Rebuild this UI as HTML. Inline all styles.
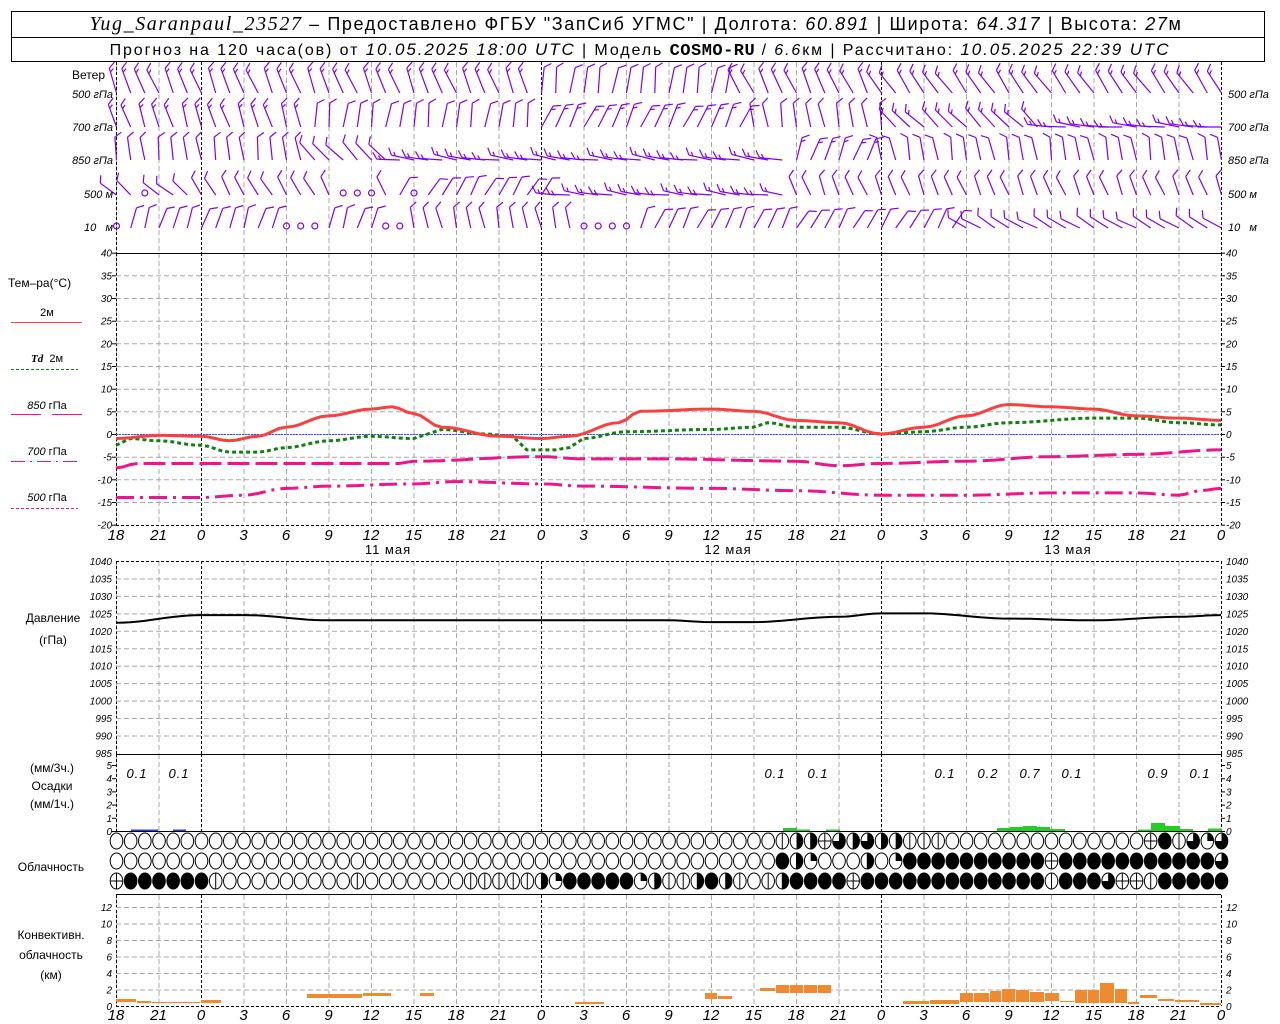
<!DOCTYPE html>
<html><head><meta charset="utf-8">
<style>
html,body{margin:0;padding:0;background:#fff;}
body{width:1280px;height:1024px;overflow:hidden;position:relative;font-family:"Liberation Sans",sans-serif;}
svg{position:absolute;left:0;top:0;}
</style></head><body>
<svg id="s" width="1280" height="1024" xmlns="http://www.w3.org/2000/svg" font-family="Liberation Sans, sans-serif">
<rect x="11.5" y="11.5" width="1253" height="50" fill="none" stroke="#000"/>
<line x1="11" y1="37.5" x2="1265" y2="37.5" stroke="#000"/>
<text x="636" y="30" font-size="18" text-anchor="middle" letter-spacing="1.6"><tspan font-family="Liberation Serif, serif" font-style="italic" font-size="20">Yug_Saranpaul_23527</tspan> – Предоставлено ФГБУ "ЗапСиб УГМС" | Долгота: <tspan font-style="italic">60.891</tspan> | Широта: <tspan font-style="italic">64.317</tspan> | Высота: <tspan font-style="italic">27</tspan>м</text>
<text x="640" y="55" font-size="16" text-anchor="middle" letter-spacing="1.9">Прогноз на 120 часа(ов) от <tspan font-style="italic" font-size="17">10.05.2025 18:00 UTC</tspan>  | Модель <tspan font-family="Liberation Mono, monospace" font-weight="bold" font-size="17" letter-spacing="0.5">COSMO-RU</tspan> / <tspan font-style="italic">6.6</tspan>км | Рассчитано: <tspan font-style="italic" font-size="17">10.05.2025 22:39 UTC</tspan></text>
<g id="g"></g>
</svg>
<script>
var g=document.getElementById('g');var out='';
var X0=116,PH=1105/78;
function X(h){return X0+h*PH;}
function L(x1,y1,x2,y2,st){out+='<line x1="'+x1.toFixed(1)+'" y1="'+y1.toFixed(1)+'" x2="'+x2.toFixed(1)+'" y2="'+y2.toFixed(1)+'" '+st+'/>';}
function T(x,y,t,st){out+='<text x="'+x+'" y="'+y+'" '+(st||'')+'>'+t+'</text>';}
var GD='stroke="#a8a8a8" stroke-dasharray="5,3"';
var BD='stroke="#000" stroke-dasharray="3,2"';
function vgrid(y1,y2){for(var h=0;h<=78;h+=3){var day=(h%24==6);L(X(h)+.5,y1,X(h)+.5,y2,day?BD:GD);}L(X0+.5,y1,X0+.5,y2,BD);L(1221.5,y1,1221.5,y2,BD);}
vgrid(62,253);vgrid(253,525);vgrid(561,754);vgrid(754,831);vgrid(895,1006);
var ty=function(v){return 434-v*4.533;};
for(var v=-15;v<=35;v+=5){L(X0,ty(v)+.5,1221,ty(v)+.5,GD);}
L(X0,253.5,1221,253.5,'stroke="#000"');L(X0,525.5,1221,525.5,BD);
L(X0,434.5,1221,434.5,'stroke="#3050ff" stroke-dasharray="2,1"');
var IT='font-size="10" font-style="italic"';
for(v=-20;v<=40;v+=5){var y=ty(v)+4;T(112,y,v,IT+' text-anchor="end"');T(1226,y,v,IT);L(112,ty(v)+.5,116,ty(v)+.5,'stroke="#000"');L(1221,ty(v)+.5,1225,ty(v)+.5,'stroke="#000"');}
var py=function(p){return 561+(1040-p)*3.49;};
for(var p=990;p<=1035;p+=5)L(X0,py(p)+.5,1221,py(p)+.5,GD);
L(X0,561.5,1221,561.5,BD);L(X0,754.5,1221,754.5,'stroke="#000"');
for(p=985;p<=1040;p+=5){T(112,py(p)+4,p,IT+' text-anchor="end"');T(1226,py(p)+4,p,IT);}
var qy=function(v){return 831-v*13.2;};
L(X0,831.5,1221,831.5,'stroke="#000"');
for(v=0;v<=5;v++){T(112,qy(v)+4,v,IT+' text-anchor="end"');T(1226,qy(v)+4,v,IT);L(112,qy(v)+.5,116,qy(v)+.5,'stroke="#000"');L(1221,qy(v)+.5,1225,qy(v)+.5,'stroke="#000"');}
var cy=function(v){return 1006-v*8.25;};
for(v=2;v<=12;v+=2)L(X0,cy(v)+.5,1221,cy(v)+.5,GD);
L(X0,894.5,1221,894.5,'stroke="#000"');L(X0,1006.5,1221,1006.5,BD);
for(v=0;v<=12;v+=2){T(112,cy(v)+4,v,IT+' text-anchor="end"');T(1226,cy(v)+4,v,IT);}
var TL='font-size="15" font-style="italic" text-anchor="middle"';
for(var h=0;h<=78;h+=3){var hr=(18+h)%24;T(X(h),540,hr,TL);T(X(h),1020,hr,TL);}
T(388,554,'11 мая','font-size="13" text-anchor="middle" letter-spacing="1"');T(728,554,'12 мая','font-size="13" text-anchor="middle" letter-spacing="1"');T(1068,554,'13 мая','font-size="13" text-anchor="middle" letter-spacing="1"');
function interp(pts,h){for(var i=0;i<pts.length-1;i++){if(h>=pts[i][0]&&h<=pts[i+1][0]){var a=pts[i],b=pts[i+1],t=(h-a[0])/(b[0]-a[0]);t=(1-Math.cos(t*Math.PI))/2;return a[1]+(b[1]-a[1])*t;}}return pts[pts.length-1][1];}
function curve(pts,fy,st){var d='';for(var h=0;h<=78;h+=0.5){d+=(h?'L':'M')+X(h).toFixed(1)+','+fy(interp(pts,h)).toFixed(1);}out+='<path d="'+d+'" fill="none" '+st+'/>';}
var t2=[[0,-1],[3,-0.3],[6,-0.5],[8,-1.5],[10,-0.5],[12,1.5],[15,4],[18,5.5],[19.5,6],[21,4.5],[23,1.5],[27,-0.5],[30,-1],[32,-0.5],[35.5,2.5],[37,5],[42,5.5],[45,5],[48,3],[51,2.5],[54,0],[57,1.5],[60,4],[63,6.5],[66,6],[69,5.5],[72,4],[75,3.5],[78,3]];
var td=[[0,-2.5],[1,-1],[3,-1.5],[6,-2.5],[8,-4],[10,-4],[12,-3],[15,-1.5],[18,-0.5],[21,-1],[22,0],[23,1],[26,0],[28,-0.5],[29,-3.5],[31,-3.5],[32,-3],[33,-1],[36,0.5],[42,1],[45,1.5],[46,2.5],[48,1.5],[51,1.5],[54,0],[57,0.5],[60,1.5],[63,2.5],[69,3.5],[72,3.5],[75,2.5],[78,2]];
var p850=[[0,-7.5],[1.5,-6.5],[12,-6.5],[20,-6.5],[21,-6],[30,-5],[33,-5.5],[39,-5.5],[48,-6],[51,-7],[54,-6.5],[60,-6],[66,-5],[72,-4.5],[78,-3.5]];
var p500=[[0,-14],[6,-14],[9,-13.5],[12,-12],[15,-11.5],[21,-11],[24,-10.5],[30,-11],[33,-11.5],[42,-12],[48,-12.5],[54,-13.5],[60,-13.5],[66,-13],[72,-13],[75,-13.5],[76.5,-12.5],[78,-12]];
curve(p500,ty,'stroke="#f0148c" stroke-width="3" stroke-dasharray="18,6,3,6"');
curve(p850,ty,'stroke="#f0148c" stroke-width="3" stroke-dasharray="22,6"');
curve(td,ty,'stroke="#108010" stroke-width="3" stroke-dasharray="4,3"');
curve(t2,ty,'stroke="#f84040" stroke-width="3"');
var pr=[[0,1022.3],[6,1024.5],[9,1024.5],[15,1023],[21,1023],[30,1023],[39,1023],[42,1022.5],[45,1022.5],[51,1024],[54,1025],[57,1025],[63,1023.5],[69,1023],[75,1024],[78,1024.5]];
curve(pr,py,'stroke="#000" stroke-width="2"');
function R(x1,y1,x2,y2,c){out+='<rect x="'+x1+'" y="'+y1+'" width="'+(x2-x1)+'" height="'+(y2-y1)+'" fill="'+c+'"/>';}
var GR='#20d020';
[[783,797,828],[797,810,829.5],[826,840,829.5],[997,1010,828],[1010,1023,827],[1023,1037,826],[1037,1050,827],[1050,1065,829],[1138,1151,829.5],[1151,1165,823],[1165,1180,826],[1180,1193,829],[1208,1222,828.5]].forEach(function(b){R(b[0],b[2],b[1],831,GR);});
R(131,829.5,158,831,'#2040e0');R(173,829.5,186,831,'#2040e0');
[137,179,775,818,945,988,1030,1072,1158,1200].forEach(function(x,i){var l=['0.1','0.1','0.1','0.1','0.1','0.2','0.7','0.1','0.9','0.1'][i];T(x,778,l,'font-size="13" font-style="italic" text-anchor="middle" letter-spacing="1"');});
var OR='#f08a30';
[[116,137,999,1002],[137,152,1001,1003],[152,201,1002,1003],[201,222,1000,1003],[307,363,994,998],[363,392,993,996],[420,435,993,996],[575,605,1002,1004],[705,718,993,999],[718,733,996,999],[760,776,988,991],[776,790,985,993],[790,804,985,993],[804,818,985,993],[818,832,985,993],[903,930,1001,1004],[930,960,1000,1004],[960,974,993,1002],[974,990,993,1002],[990,1002,991,1002],[1002,1016,989,1002],[1016,1030,990,1002],[1030,1045,992,1002],[1045,1060,993,1001],[1060,1075,1001,1002],[1075,1088,990,1003],[1088,1100,990,1003],[1100,1115,983,1003],[1115,1128,989,1003],[1128,1140,1002,1004],[1140,1158,995,998],[1158,1175,999,1001],[1175,1200,1000,1002],[1200,1222,1003,1005]].forEach(function(b){R(b[0],b[2],b[1]-1,b[3],OR);});
function row(def){var a=[];for(var i=0;i<79;i++)a.push('o');for(var k in def)a[+k]=def[k];return a;}
var r1=row({47:'v',48:'Q',49:'R',50:'H',51:'T',52:'R',53:'T',54:'R',55:'Q',56:'v',57:'v',58:'v',73:'H',74:'f',75:'v',76:'T',77:'q',78:'T'});
var r2d={47:'f',48:'R',49:'q',53:'R',55:'q'};for(var i=56;i<=78;i++)r2d[i]='f';r2d[66]='H';r2d[78]='T';
var r2=row(r2d);
var r3d={0:'H'};for(i=1;i<=6;i++)r3d[i]='f';[7,17,25,26,27,28,29].forEach(function(k){r3d[k]='v';});r3d[30]='R';r3d[31]='q';for(i=32;i<=36;i++)r3d[i]='f';r3d[37]='q';r3d[38]='R';r3d[39]='v';r3d[40]='v';r3d[41]='R';
for(i=42;i<=78;i++)r3d[i]='f';r3d[43]='R';r3d[44]='v';r3d[45]='o';r3d[46]='v';r3d[47]='R';r3d[52]='H';r3d[66]='v';r3d[70]='T';r3d[71]='H';r3d[72]='H';r3d[73]='v';
var r3=row(r3d);
function cloud(x,y,t){var rx=6.3,ry=8;out+='<ellipse cx="'+x+'" cy="'+y+'" rx="'+rx+'" ry="'+ry+'" fill="'+(t=='f'?'#000':'#fff')+'" stroke="#000"/>';
if(t=='v'||t=='R'||t=='H')L(x,y-ry,x,y+ry,'stroke="#000"');
if(t=='H')L(x-rx,y,x+rx,y,'stroke="#000"');
if(t=='R')out+='<path d="M'+x+','+(y-ry)+'A'+rx+','+ry+' 0 0 1 '+x+','+(y+ry)+'Z"/>';
if(t=='q'||t=='Q')out+='<path d="M'+x+','+y+'L'+x+','+(y-ry)+'A'+rx+','+ry+' 0 0 1 '+(x+rx)+','+y+'Z"/>';
if(t=='Q')out+='<path d="M'+x+','+y+'L'+(x+rx)+','+y+'A'+rx+','+ry+' 0 0 1 '+x+','+(y+ry)+'Z"/>';
if(t=='T')out+='<path d="M'+x+','+y+'L'+x+','+(y-ry)+'A'+rx+','+ry+' 0 1 1 '+(x-rx)+','+y+'Z"/>';}
for(i=0;i<79;i++){cloud(X(i)+.5,841,r1[i]);cloud(X(i)+.5,861,r2[i]);cloud(X(i)+.5,881,r3[i]);}
var PC='stroke="#8000f0" stroke-width="1.2" fill="none"';
function barb(x,yb,ang,len,nb,side){var a=ang*Math.PI/180;var dx=-Math.sin(a),dy=-Math.cos(a);var tx=x+dx*len,ty2=yb+dy*len;L(x,yb,tx,ty2,PC);
for(var k=0;k<nb;k++){var px=tx-dx*k*4,py2=ty2-dy*k*4;var b=side*1.0;var bx=dx*Math.cos(b)-dy*Math.sin(b),by=dx*Math.sin(b)+dy*Math.cos(b);var bl=(k==nb-1&&nb>1)?4.5:8;L(px,py2,px+bx*bl,py2+by*bl,PC);}}
function calm(x,y){out+='<circle cx="'+x+'" cy="'+y+'" r="3" '+PC+'/>';}
function pick(tab,h){for(var i=0;i<tab.length;i++)if(h<tab[i][0])return tab[i];return tab[tab.length-1];}
var lv=[
 {y:93,l:26,t:[[30,22,2,1],[44,-8,1,1],[54,25,2,1],[79,35,2,1]]},
 {y:127,l:24,t:[[14,18,2,1],[30,-8,1,1],[45,-25,2,1],[55,10,1,1],[66,45,2,1],[79,84,2,1]]},
 {y:160,l:23,t:[[14,8,1,1],[20,45,1,1],[48,82,2,1],[54,-20,2,1],[79,10,1,-1]]},
 {y:195,l:20,t:[[6,50,1,1],[20,30,1,1],[31,-30,1,1],[48,82,2,1],[79,22,1,1]]},
 {y:228,l:21,t:[[20,-18,1,1],[34,12,1,1],[48,-25,1,1],[60,-30,1,1],[79,60,1,1]]}];
var calms={3:[2,16,17,18,21],4:[0,12,13,14,19,20,33,34,35,36]};
for(var li=0;li<5;li++){var o=lv[li];for(h=0;h<=78;h++){if(calms[li]&&calms[li].indexOf(h)>=0){calm(X(h)+.5,o.y-2);continue;}var pp=pick(o.t,h);var jit=((h*37+li*11)%7-3)*2;barb(X(h)+.5,o.y,pp[1]+jit,o.l,pp[2],pp[3]);}}
var LS='font-size="11"';
T(72,79,'Ветер','font-size="12"');
[['500 гПа',98],['700 гПа',131],['850 гПа',164],['500 м',198],['10   м',231]].forEach(function(a){T(113,a[1],a[0],'font-size="11" text-anchor="end" font-style="italic" xml:space="preserve"');T(1228,a[1],a[0],'font-size="11" font-style="italic" xml:space="preserve"');});
T(8,287,'Тем–ра(°С)','font-size="12"');
T(47,316,'2м',LS+' text-anchor="middle"');L(11,322.5,82,322.5,'stroke="#f84040"');
T(47,362,'<tspan font-style="italic" font-weight="bold" font-family="Liberation Serif">Td</tspan>  2м',LS+' text-anchor="middle" xml:space="preserve"');L(11,369.5,78,369.5,'stroke="#108010" stroke-dasharray="3,2"');
T(47,409,'<tspan font-style="italic">850</tspan> гПа',LS+' text-anchor="middle"');L(11,414.5,41,414.5,'stroke="#f0148c"');L(52,414.5,82,414.5,'stroke="#f0148c"');
T(47,455,'<tspan font-style="italic">700</tspan> гПа',LS+' text-anchor="middle"');L(11,461.5,78,461.5,'stroke="#f0148c" stroke-dasharray="14,5,2,5"');
T(47,501,'<tspan font-style="italic">500</tspan> гПа',LS+' text-anchor="middle"');L(11,508.5,78,508.5,'stroke="#f0148c" stroke-dasharray="3,2"');
T(53,622,'Давление','font-size="12" text-anchor="middle"');T(53,644,'(гПа)','font-size="12" text-anchor="middle"');
T(52,772,'(мм/3ч.)','font-size="12" text-anchor="middle"');T(52,790,'Осадки','font-size="12" text-anchor="middle"');T(52,808,'(мм/1ч.)','font-size="12" text-anchor="middle"');
T(51,871,'Облачность','font-size="12" text-anchor="middle"');
T(51,939,'Конвективн.','font-size="12" text-anchor="middle"');T(51,959,'облачность','font-size="12" text-anchor="middle"');T(51,979,'(км)','font-size="12" text-anchor="middle"');
g.innerHTML=out;
</script>
</body></html>
